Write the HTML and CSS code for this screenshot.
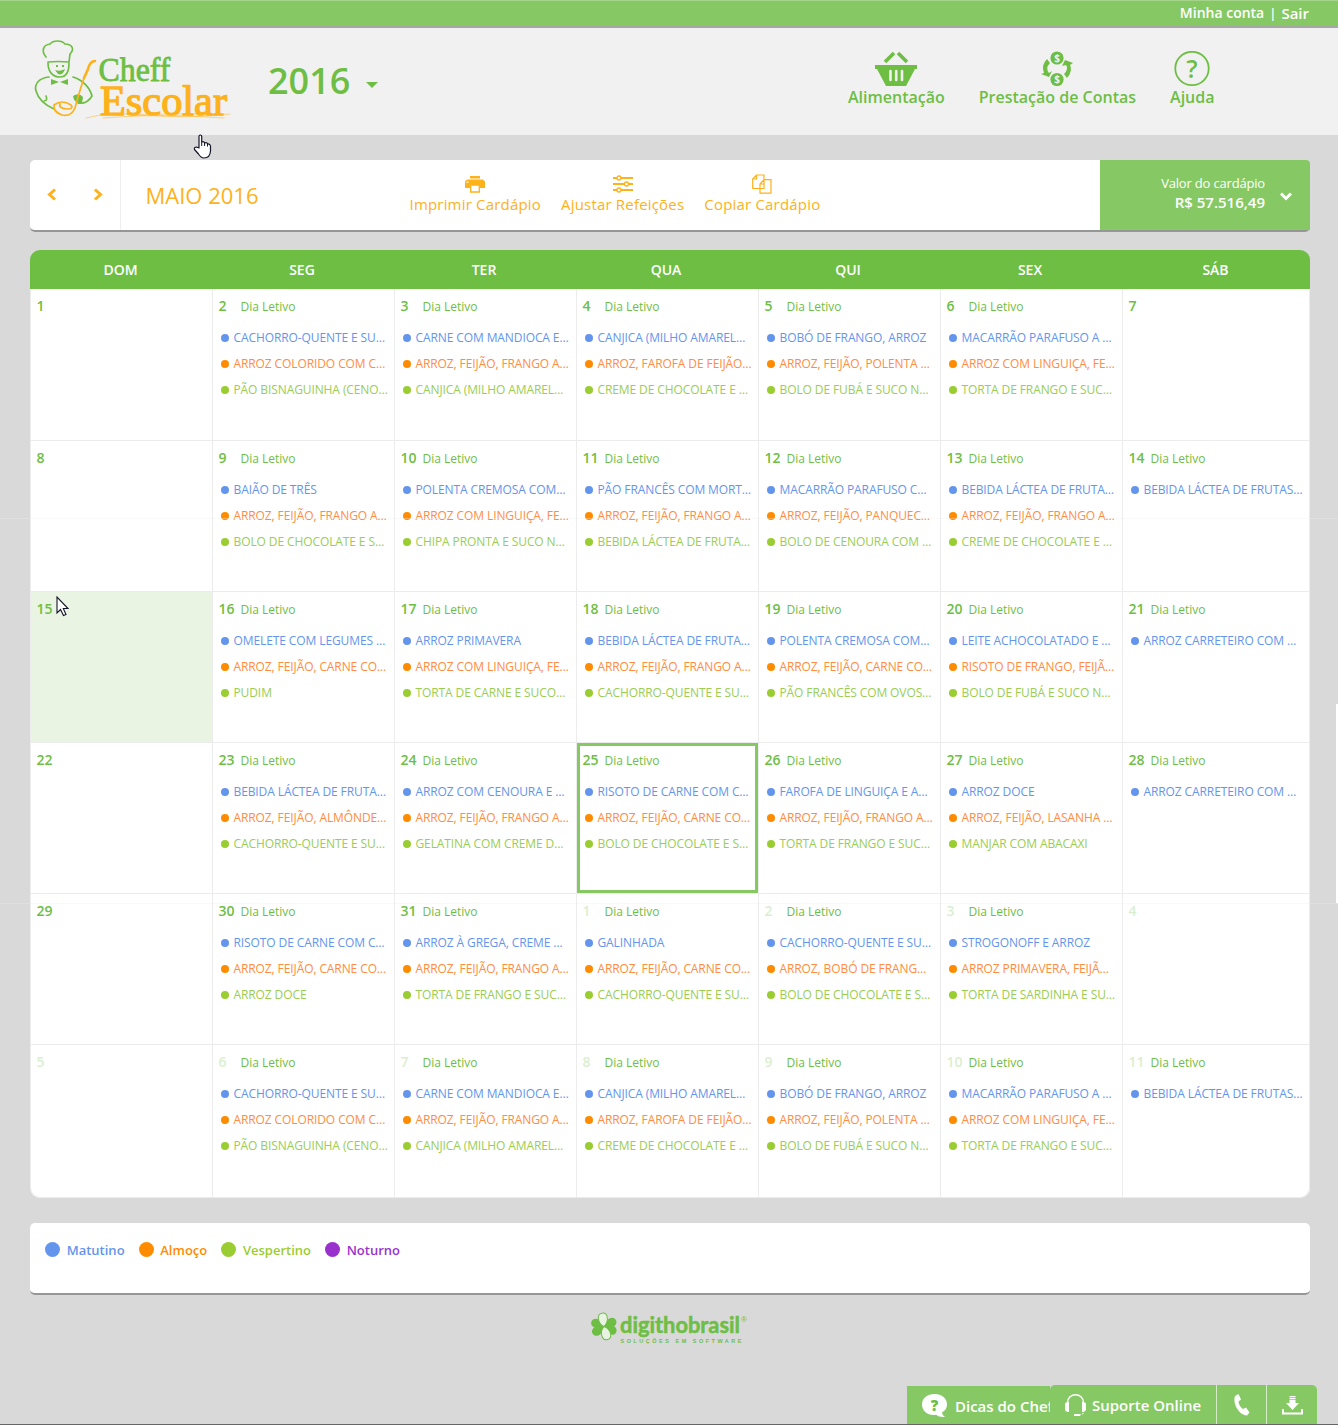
FILE: index.html
```html
<!DOCTYPE html>
<html lang="pt-BR">
<head>
<meta charset="utf-8">
<title>Cheff Escolar</title>
<link rel="stylesheet" href="styles.css">
</head>
<body>
<div class="topbar"><a class="account">Minha conta</a><span class="sep">|</span><a class="exit">Sair</a></div>
<header class="header">
  <svg class="logo" width="202" height="84" viewBox="32 38 202 84">
    <g fill="none" stroke="#6ebe44" stroke-width="1.7" stroke-linecap="round" stroke-linejoin="round">
      <path d="M46 57C41 51 43 45 50 44C53 40 62 40 65 44C72 44 75 49 70 54L69 62Q58 61 48 62"/>
      <path d="M48 63C48 72 53 77 60 77C66 77 69 72 69 63"/>
      <path d="M49 77C39 78 34 84 36 91C38 98 45 105 54 109M73 77C83 80 90 88 92 96C89 101 84 104 78 103"/>
      <path d="M46 96Q48 101 44 101"/>
    </g>
    <path fill="#6ebe44" d="M55 70Q60 72 65 69Q63 76 58 74zM56 65h2v2h-2zM62 65h2v2h-2zM51 79L59 82L51 85zM68 79L60 82L68 85zM73 96Q79 92 83 97L82 103Q74 104 73 96z"/>
    <g fill="none" stroke="#fdb11a" stroke-linecap="round">
      <path stroke-width="2.6" d="M95 61Q90 61 88 69L84 78"/>
      <path stroke-width="1.7" d="M84 78Q78 96 75 108Q71 117 62 115Q53 112 54 105Q62 99 71 105Q74 109 67 109Q58 108 60 104"/>
      <path stroke-width="1" opacity=".5" d="M86 118Q112 111 147 115T230 114M103 118Q160 113 224 118M130 116Q178 112 218 115"/>
    </g>
    <text class="logo-name logo-green" x="98.500" y="80.500" font-size="34" textLength="72" lengthAdjust="spacingAndGlyphs">Cheff</text>
    <text class="logo-name logo-orange" x="100" y="114.500" font-size="43" textLength="127" lengthAdjust="spacingAndGlyphs">Escolar</text>
  </svg>
  <div class="year">2016<span class="caret"></span></div>
  <nav class="nav">
    <a>
      <svg width="42" height="36" viewBox="0 0 42 36"><path fill="#6ebe44" d="M0 14H42V18H40L31 35H11L2 18H0z"/><path fill="none" stroke="#6ebe44" stroke-width="3.600" d="M10 11L19 2M32 11L23 2"/><path stroke="#f1f1f1" stroke-width="2.600" stroke-linecap="round" d="M15.500 20v9M21.200 20v9M27 20v9"/></svg>
      <span>Alimentação</span>
    </a>
    <a>
      <svg width="34" height="36" viewBox="0 0 34 36"><g fill="#6ebe44"><circle cx="17" cy="7" r="6.600"/><circle cx="17" cy="28.500" r="6.600"/><path d="M7 8L10 12Q5 17 9 22L12 20L9 26L1 23L4 22Q1 14 7 8zM27 27L24 23Q29 18 26 14L22 15L25 9L33 12L30 14Q33 20 27 27z"/></g><g class="coin"><text x="17" y="10.500">$</text><text x="17" y="32">$</text></g></svg>
      <span>Prestação de Contas</span>
    </a>
    <a>
      <svg width="36" height="36" viewBox="0 0 36 36"><circle cx="18" cy="17.500" r="16.700" fill="none" stroke="#6ebe44" stroke-width="1.800"/><text class="help" x="18" y="27">?</text></svg>
      <span>Ajuda</span>
    </a>
  </nav>
</header>
<main class="main">
  <section class="toolbar">
    <div class="arrows">
      <svg width="10" height="13" viewBox="0 0 10 13"><path fill="none" stroke="#fdb11a" stroke-width="3" d="M8 1.500L2.500 6.500L8 11.500"/></svg>
      <svg width="10" height="13" viewBox="0 0 10 13"><path fill="none" stroke="#fdb11a" stroke-width="3" d="M2 1.500L7.500 6.500L2 11.500"/></svg>
    </div>
    <h1 class="month">MAIO 2016</h1>
    <div class="tools">
      <a><svg width="20" height="20" viewBox="0 0 20 20"><path fill="#fdb11a" d="M5 2h10v2.500H5zM2 5.500h16l2 2V14h-5V11H5v3H0V7.500z"/><path fill="#fff" stroke="#fdb11a" stroke-width="1.300" d="M5.700 11.200H14.300V18H5.700z"/><path fill="#fff" d="M1.500 7.500h2v1.300h-2z"/></svg><span>Imprimir Cardápio</span></a>
      <a><svg width="20" height="20" viewBox="0 0 20 20"><path stroke="#fdb11a" stroke-width="2" d="M0 4H20M0 10H20M0 16H20"/><g fill="#fff" stroke="#fdb11a" stroke-width="1.300"><circle cx="6" cy="4" r="2"/><circle cx="13.500" cy="10" r="2"/><circle cx="6" cy="16" r="2"/></g></svg><span>Ajustar Refeições</span></a>
      <a><svg width="20" height="20" viewBox="0 0 20 20"><g fill="#fff" stroke="#fdb11a" stroke-width="1.200"><path d="M4.500 1H12V14.500H.700V5zM4.500 1V5H.700M12 5.700H19V19.200H8V10zM12 5.700V10H8"/></g></svg><span>Copiar Cardápio</span></a>
    </div>
    <div class="total">
      <div><span>Valor do cardápio</span><strong>R$ 57.516,49</strong></div>
      <svg width="12" height="9" viewBox="0 0 12 9"><path fill="none" stroke="#fff" stroke-width="3" d="M1 1.500L6 6.500L11 1.500"/></svg>
    </div>
  </section>

  <section class="calendar">
    <div class="weekdays"><span>DOM</span><span>SEG</span><span>TER</span><span>QUA</span><span>QUI</span><span>SEX</span><span>SÁB</span></div>
    <div class="days">
      <div class="day"><b>1</b></div>
      <div class="day"><b>2</b><em>Dia Letivo</em><ul><li>CACHORRO-QUENTE E SU…</li><li>ARROZ COLORIDO COM C…</li><li>PÃO BISNAGUINHA (CENO…</li></ul></div>
      <div class="day"><b>3</b><em>Dia Letivo</em><ul><li>CARNE COM MANDIOCA E…</li><li>ARROZ, FEIJÃO, FRANGO A…</li><li>CANJICA (MILHO AMAREL…</li></ul></div>
      <div class="day"><b>4</b><em>Dia Letivo</em><ul><li>CANJICA (MILHO AMAREL…</li><li>ARROZ, FAROFA DE FEIJÃO…</li><li>CREME DE CHOCOLATE E …</li></ul></div>
      <div class="day"><b>5</b><em>Dia Letivo</em><ul><li>BOBÓ DE FRANGO, ARROZ</li><li>ARROZ, FEIJÃO, POLENTA …</li><li>BOLO DE FUBÁ E SUCO N…</li></ul></div>
      <div class="day"><b>6</b><em>Dia Letivo</em><ul><li>MACARRÃO PARAFUSO A …</li><li>ARROZ COM LINGUIÇA, FE…</li><li>TORTA DE FRANGO E SUC…</li></ul></div>
      <div class="day"><b>7</b></div>

      <div class="day"><b>8</b></div>
      <div class="day"><b>9</b><em>Dia Letivo</em><ul><li>BAIÃO DE TRÊS</li><li>ARROZ, FEIJÃO, FRANGO A…</li><li>BOLO DE CHOCOLATE E S…</li></ul></div>
      <div class="day"><b>10</b><em>Dia Letivo</em><ul><li>POLENTA CREMOSA COM…</li><li>ARROZ COM LINGUIÇA, FE…</li><li>CHIPA PRONTA E SUCO N…</li></ul></div>
      <div class="day"><b>11</b><em>Dia Letivo</em><ul><li>PÃO FRANCÊS COM MORT…</li><li>ARROZ, FEIJÃO, FRANGO A…</li><li>BEBIDA LÁCTEA DE FRUTA…</li></ul></div>
      <div class="day"><b>12</b><em>Dia Letivo</em><ul><li>MACARRÃO PARAFUSO C…</li><li>ARROZ, FEIJÃO, PANQUEC…</li><li>BOLO DE CENOURA COM …</li></ul></div>
      <div class="day"><b>13</b><em>Dia Letivo</em><ul><li>BEBIDA LÁCTEA DE FRUTA…</li><li>ARROZ, FEIJÃO, FRANGO A…</li><li>CREME DE CHOCOLATE E …</li></ul></div>
      <div class="day"><b>14</b><em>Dia Letivo</em><ul><li>BEBIDA LÁCTEA DE FRUTAS…</li></ul></div>

      <div class="day today"><b>15</b></div>
      <div class="day"><b>16</b><em>Dia Letivo</em><ul><li>OMELETE COM LEGUMES …</li><li>ARROZ, FEIJÃO, CARNE CO…</li><li>PUDIM</li></ul></div>
      <div class="day"><b>17</b><em>Dia Letivo</em><ul><li>ARROZ PRIMAVERA</li><li>ARROZ COM LINGUIÇA, FE…</li><li>TORTA DE CARNE E SUCO…</li></ul></div>
      <div class="day"><b>18</b><em>Dia Letivo</em><ul><li>BEBIDA LÁCTEA DE FRUTA…</li><li>ARROZ, FEIJÃO, FRANGO A…</li><li>CACHORRO-QUENTE E SU…</li></ul></div>
      <div class="day"><b>19</b><em>Dia Letivo</em><ul><li>POLENTA CREMOSA COM…</li><li>ARROZ, FEIJÃO, CARNE CO…</li><li>PÃO FRANCÊS COM OVOS…</li></ul></div>
      <div class="day"><b>20</b><em>Dia Letivo</em><ul><li>LEITE ACHOCOLATADO E …</li><li>RISOTO DE FRANGO, FEIJÃ…</li><li>BOLO DE FUBÁ E SUCO N…</li></ul></div>
      <div class="day"><b>21</b><em>Dia Letivo</em><ul><li>ARROZ CARRETEIRO COM …</li></ul></div>

      <div class="day"><b>22</b></div>
      <div class="day"><b>23</b><em>Dia Letivo</em><ul><li>BEBIDA LÁCTEA DE FRUTA…</li><li>ARROZ, FEIJÃO, ALMÔNDE…</li><li>CACHORRO-QUENTE E SU…</li></ul></div>
      <div class="day"><b>24</b><em>Dia Letivo</em><ul><li>ARROZ COM CENOURA E …</li><li>ARROZ, FEIJÃO, FRANGO A…</li><li>GELATINA COM CREME D…</li></ul></div>
      <div class="day selected"><b>25</b><em>Dia Letivo</em><ul><li>RISOTO DE CARNE COM C…</li><li>ARROZ, FEIJÃO, CARNE CO…</li><li>BOLO DE CHOCOLATE E S…</li></ul></div>
      <div class="day"><b>26</b><em>Dia Letivo</em><ul><li>FAROFA DE LINGUIÇA E A…</li><li>ARROZ, FEIJÃO, FRANGO A…</li><li>TORTA DE FRANGO E SUC…</li></ul></div>
      <div class="day"><b>27</b><em>Dia Letivo</em><ul><li>ARROZ DOCE</li><li>ARROZ, FEIJÃO, LASANHA …</li><li>MANJAR COM ABACAXI</li></ul></div>
      <div class="day"><b>28</b><em>Dia Letivo</em><ul><li>ARROZ CARRETEIRO COM …</li></ul></div>

      <div class="day"><b>29</b></div>
      <div class="day"><b>30</b><em>Dia Letivo</em><ul><li>RISOTO DE CARNE COM C…</li><li>ARROZ, FEIJÃO, CARNE CO…</li><li>ARROZ DOCE</li></ul></div>
      <div class="day"><b>31</b><em>Dia Letivo</em><ul><li>ARROZ À GREGA, CREME …</li><li>ARROZ, FEIJÃO, FRANGO A…</li><li>TORTA DE FRANGO E SUC…</li></ul></div>
      <div class="day other"><b>1</b><em>Dia Letivo</em><ul><li>GALINHADA</li><li>ARROZ, FEIJÃO, CARNE CO…</li><li>CACHORRO-QUENTE E SU…</li></ul></div>
      <div class="day other"><b>2</b><em>Dia Letivo</em><ul><li>CACHORRO-QUENTE E SU…</li><li>ARROZ, BOBÓ DE FRANG…</li><li>BOLO DE CHOCOLATE E S…</li></ul></div>
      <div class="day other"><b>3</b><em>Dia Letivo</em><ul><li>STROGONOFF E ARROZ</li><li>ARROZ PRIMAVERA, FEIJÃ…</li><li>TORTA DE SARDINHA E SU…</li></ul></div>
      <div class="day other"><b>4</b></div>

      <div class="day other"><b>5</b></div>
      <div class="day other"><b>6</b><em>Dia Letivo</em><ul><li>CACHORRO-QUENTE E SU…</li><li>ARROZ COLORIDO COM C…</li><li>PÃO BISNAGUINHA (CENO…</li></ul></div>
      <div class="day other"><b>7</b><em>Dia Letivo</em><ul><li>CARNE COM MANDIOCA E…</li><li>ARROZ, FEIJÃO, FRANGO A…</li><li>CANJICA (MILHO AMAREL…</li></ul></div>
      <div class="day other"><b>8</b><em>Dia Letivo</em><ul><li>CANJICA (MILHO AMAREL…</li><li>ARROZ, FAROFA DE FEIJÃO…</li><li>CREME DE CHOCOLATE E …</li></ul></div>
      <div class="day other"><b>9</b><em>Dia Letivo</em><ul><li>BOBÓ DE FRANGO, ARROZ</li><li>ARROZ, FEIJÃO, POLENTA …</li><li>BOLO DE FUBÁ E SUCO N…</li></ul></div>
      <div class="day other"><b>10</b><em>Dia Letivo</em><ul><li>MACARRÃO PARAFUSO A …</li><li>ARROZ COM LINGUIÇA, FE…</li><li>TORTA DE FRANGO E SUC…</li></ul></div>
      <div class="day other"><b>11</b><em>Dia Letivo</em><ul><li>BEBIDA LÁCTEA DE FRUTAS…</li></ul></div>
    </div>
  </section>

  <section class="legend"><span class="morning">Matutino</span><span class="lunch">Almoço</span><span class="afternoon">Vespertino</span><span class="night">Noturno</span></section>
</main>
<footer class="footer">
  <svg width="160" height="36" viewBox="590 1310 160 36">
    <defs><path id="petal" d="M0 0C-6 -4 -6 -13.500 0 -13.500C6 -13.500 6 -4 0 0z"/></defs>
    <g transform="translate(605 1326.500)" fill="#6ebe44">
      <use href="#petal" transform="rotate(62)"/>
      <use href="#petal" transform="rotate(115)"/>
      <use href="#petal" transform="rotate(237)"/>
      <use href="#petal" transform="rotate(292)"/>
      <g fill="#e9f3e3" stroke="#6ebe44"><use href="#petal" transform="rotate(-8)"/><use href="#petal" transform="rotate(165)"/></g>
    </g>
    <text class="brand" x="621" y="1332.500" textLength="120" lengthAdjust="spacingAndGlyphs">digithobrasil</text>
    <text class="brand-reg" x="742" y="1322">®</text>
    <text class="brand-sub" x="621.500" y="1343" textLength="121">SOLUÇÕES EM SOFTWARE</text>
  </svg>
</footer>

<div class="dock">
  <a class="tips"><svg width="26" height="24" viewBox="0 0 26 24"><path fill="#fff" d="M12.500 0C20 0 25 4.500 25 10.500C25 14 23 17 20 18.500Q20 21 23 23Q17 23.500 14 20.800C6 22 0 17 0 10.500C0 4.500 5 0 12.500 0z"/><text class="tips-mark" x="12.500" y="16.500">?</text></svg><span>Dicas do Chef</span></a>
  <div class="support">
    <a class="online"><svg width="21" height="23" viewBox="0 0 21 23"><path fill="none" stroke="#fff" stroke-width="1.500" d="M2.500 9C2.500 -2 18.500 -2 18.500 9"/><path fill="#fff" d="M0 10Q0 8 4 8V18Q0 18 0 15zM21 10Q21 8 17 8V18Q21 18 21 15zM9 20h6v2H9z"/><path fill="none" stroke="#fff" stroke-dasharray="2 1" d="M14 21Q18 21 19 18"/></svg><span>Suporte Online</span></a>
    <a class="phone"><svg width="16" height="22" viewBox="0 0 16 22"><path fill="#fff" d="M1 2L4.500 0L7 5.500L4.500 7.500Q5 12 9 15L12 13.500L15.500 18.500L13 21.500C6 22 -2 10 1 2z"/></svg></a>
    <a class="download"><svg width="21" height="19" viewBox="0 0 21 19"><path fill="#fff" d="M7.500 0h6v1.200h-6zM7.500 2h6v1.200h-6zM7.500 4h6v3H17L10.500 14L4 7h3.500zM0 13h2v3.500h17V13h2v5.500H0z"/></svg></a>
  </div>
</div>
<div class="seam seam-upper"></div>
<div class="seam seam-lower"></div>
<div class="scroll-edge"></div>
<svg class="cursor hand" width="20" height="25" viewBox="0 0 20 25"><path fill="#fff" stroke="#15152a" stroke-width="1.200" stroke-linejoin="round" d="M6 14V2.500Q6 1 7.300 1Q8.700 1 8.700 2.500V8Q11 7 11.500 9Q14 8 14.500 10Q17 9.500 17.500 12V17Q17 24 11 24Q8 24 5.500 20L1.500 15.500Q1 13 3.500 13z"/><path stroke="#15152a" d="M8.700 8v4M11.600 9v3M14.500 10v2.500"/></svg>
<svg class="cursor pointer" width="14" height="21" viewBox="0 0 14 21"><path fill="#fff" stroke="#15152a" stroke-width="1.100" d="M1 1V17L4.500 13.500L7.500 19.500L10 18.500L7.300 12.500H12z"/></svg>
</body>
</html>
```
FILE: styles.css
```css
* { box-sizing: border-box; }
body {
  margin: 0;
  height: 1425px;
  position: relative;
  overflow: hidden;
  background: #d9d9d9;
  font-family: "Open Sans", sans-serif;
  color: #6ebe44;
}
.topbar {
  height: 28px;
  background: #86c964;
  border-top: 1px solid #a3d48a;
  border-bottom: 2px solid #a6a6a6;
  display: flex;
  justify-content: flex-end;
  align-items: center;
  gap: 5px;
  padding: 0 29px 2px 0;
  color: #fff;
  font-size: 14px;
  font-weight: 600;
  white-space: nowrap;
}
.sep { font-size: 13px; }
.exit { font-size: 15px; }
.header {
  height: 107px;
  background: #f1f1f1;
  display: flex;
  align-items: flex-start;
  padding: 10px 123.5px 0 32px;
}
.logo { flex: none; }
.logo-name { font-family: "Liberation Serif", serif; stroke-width: .8; }
.logo-green { fill: #6ebe44; stroke: #6ebe44; }
.logo-orange { fill: #fdb11a; stroke: #fdb11a; stroke-width: 1.3; }
.year {
  display: flex;
  align-items: center;
  gap: 16px;
  margin: 17px 0 0 34px;
  font-size: 36px;
  font-weight: 600;
  line-height: 52px;
}
.caret {
  border: 6px solid transparent;
  border-top-color: #6ebe44;
  border-bottom: 0;
  margin-top: 7px;
}
.nav { display: flex; gap: 34px; margin: 13px 0 0 auto; }
.nav a {
  display: flex;
  flex-direction: column;
  align-items: center;
  font-size: 16px;
  font-weight: 600;
  line-height: 20px;
  white-space: nowrap;
}
.coin { fill: #f1f1f1; font-size: 10px; font-weight: 700; text-anchor: middle; }
.help { fill: #6ebe44; font-size: 25px; font-weight: 600; text-anchor: middle; }
.main { padding: 25px 28px 0 30px; }
.toolbar {
  height: 72px;
  display: flex;
  background: #fff;
  border-bottom: 2px solid #959795;
  border-radius: 5px;
  color: #fdb11a;
}
.arrows {
  width: 91px;
  border-right: 1px solid #eee;
  display: flex;
  gap: 36px;
  align-items: center;
  padding: 0 0 2px 17px;
}
.month { margin: 0; padding-left: 24.5px; width: 288.5px; font-size: 22px; font-weight: 400; line-height: 71px; }
.tools { display: flex; gap: 20px; padding-top: 14px; }
.tools a {
  display: flex;
  flex-direction: column;
  align-items: center;
  font-size: 15px;
  letter-spacing: .19px;
  line-height: 20px;
  white-space: nowrap;
}
.total {
  width: 210px;
  margin-left: auto;
  background: #86c964;
  color: #fff;
  border-radius: 0 4px 0 0;
  display: flex;
  justify-content: flex-end;
  align-items: center;
  gap: 15px;
  padding: 0 18px 5px 0;
  text-align: right;
}
.total span, .total strong { display: block; font-size: 13px; line-height: 19px; }
.total span { letter-spacing: -.18px; }
.total strong { font-size: 15px; font-weight: 600; }
.total svg { margin-top: 7px; }
.calendar { margin-top: 18px; }
.weekdays {
  display: grid;
  grid-template-columns: 181px repeat(5, 182px) 189px;
  background: #6ebe44;
  border-radius: 10px 10px 0 0;
  height: 39px;
  color: #fff;
  font-size: 14px;
  font-weight: 600;
  line-height: 39px;
  text-align: center;
}
.days {
  display: grid;
  grid-template-columns: repeat(6, 182px) 187px;
  grid-template-rows: 152px repeat(4, 151px) 153px;
  border-left: 1px solid #ececec;
  background: #fff;
  border-radius: 0 0 10px 10px;
  overflow: hidden;
}
.day {
  border: solid #ececec;
  border-width: 0 1px 1px 0;
  padding: 5px 0 0 5.5px;
  overflow: hidden;
  white-space: nowrap;
}
.day:nth-last-child(7) { border-bottom-left-radius: 10px; }
.day:last-child { border-bottom-right-radius: 10px; }
.day b {
  display: inline-block;
  width: 22px;
  font-size: 14px;
  font-weight: 600;
  line-height: 19px;
}
.day em { font-size: 12px; font-style: normal; line-height: 19px; }
.day ul { list-style: none; margin: 8px 0 0; padding: 0 0 0 2.5px; }
.day li {
  display: flex;
  align-items: center;
  height: 26px;
  gap: 4.5px;
  font-size: 12px;
  letter-spacing: -.1px;
  color: #6495ed;
}
.day li::before { content: ""; width: 8px; height: 8px; margin-top: 2px; border-radius: 50%; background: #6495ed; }
.day li:nth-child(2) { color: #ff8c40; }
.day li:nth-child(2)::before { background: #ff8c00; }
.day li:nth-child(3) { color: #9acd52; }
.day li:nth-child(3)::before { background: #9acd32; }
.today { background: #e9f4e2; }
.selected { box-shadow: inset 0 0 0 3px #86c964; }
.other b { opacity: .25; }
.legend {
  height: 72px;
  margin-top: 25px;
  padding: 17px 15px;
  display: flex;
  gap: 14px;
  background: #fff;
  border-bottom: 2px solid #959795;
  border-radius: 5px;
  font-size: 13px;
  font-weight: 600;
  line-height: 21px;
}
.legend span { display: flex; gap: 6.7px; }
.legend span::before { content: ""; width: 15px; height: 15px; border-radius: 50%; margin-top: 2px; background: currentColor; }
.morning { color: #6495ed; }
.lunch { color: #ff8c00; }
.afternoon { color: #9acd32; }
.night { color: #9932cc; }
.footer { display: flex; justify-content: center; padding-top: 15px; }
.brand { fill: #6ebe44; stroke: #6ebe44; stroke-width: .5; font: 700 22px Lato, sans-serif; }
.brand-reg { fill: #6ebe44; font: 8px "Liberation Sans", sans-serif; }
.brand-sub { fill: #6ebe44; font: 700 5.500px "Liberation Sans", sans-serif; }
.dock {
  position: absolute;
  left: 907px;
  bottom: 0;
  width: 431px;
  height: 40px;
  display: flex;
  align-items: flex-end;
  color: #fff;
  font-size: 15px;
  font-weight: 600;
  white-space: nowrap;
}
.tips { width: 143px; height: 39px; overflow: hidden; background: #86c964; display: flex; align-items: center; gap: 7px; padding-left: 15px; }
.tips svg { flex: none; }
.tips-mark { fill: #6ebe44; font-size: 15px; font-weight: 800; text-anchor: middle; }
.support { display: flex; width: 267px; height: 40px; background: #86c964; border-radius: 5px 5px 0 0; }
.support a { display: flex; align-items: center; }
.online { width: 167px; padding-left: 15px; gap: 6px; border-right: 1px solid #d4edc7; }
.phone { width: 50px; justify-content: center; border-right: 1px solid #d4edc7; }
.download { width: 50px; justify-content: center; }
body::after { content: ""; position: absolute; left: 0; right: 0; bottom: 0; height: 1px; background: #666; }
.seam { position: absolute; left: 0; width: 100%; height: 1px; background: rgba(238, 238, 238, .35); }
.seam-upper { top: 518px; }
.seam-lower { top: 903px; }
.scroll-edge { position: absolute; left: 1336px; top: 704px; width: 2px; height: 199px; background: #fff; }
.cursor { position: absolute; }
.hand { left: 192.5px; top: 133.5px; }
.pointer { left: 55.5px; top: 595.5px; }
```
